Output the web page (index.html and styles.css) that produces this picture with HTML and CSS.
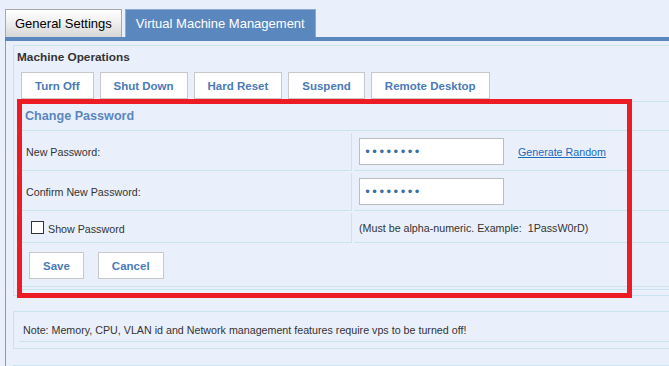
FILE: index.html
```html
<!DOCTYPE html>
<html lang="en">
  <head>
    <meta charset="UTF-8" />
    <meta name="viewport" content="width=device-width" />
    <title>Virtual Machine Management</title>
    <link rel="stylesheet" href="styles.css">
  </head>

  <body>
    <div class="tabs">
      <a class="tab" href="#">General Settings</a>
      <a class="tab active" href="#">Virtual Machine Management</a>
    </div>
    <div class="tab-bar"></div>

    <div class="panel">
      <div class="group">
        <h2>Machine Operations</h2>
        <div class="ops">
          <button type="button">Turn Off</button>
          <button type="button">Shut Down</button>
          <button type="button">Hard Reset</button>
          <button type="button">Suspend</button>
          <button type="button">Remote Desktop</button>
        </div>

        <form class="section">
          <div class="title">Change Password</div>

          <label class="cell label" for="new-pw">New Password:</label>
          <div class="cell value">
            <input type="password" id="new-pw" value="abcd1234" />
            <a href="#" class="generate">Generate Random</a>
          </div>

          <label class="cell label" for="confirm-pw">Confirm New Password:</label>
          <div class="cell value">
            <input type="password" id="confirm-pw" value="abcd1234" />
          </div>

          <div class="cell label">
            <label class="show"><input type="checkbox" class="check" />Show Password</label>
          </div>
          <div class="cell value hint">(Must be alpha-numeric. Example:&nbsp; 1PassW0rD)</div>

          <div class="cell actions">
            <button type="button">Save</button>
            <button type="button">Cancel</button>
          </div>
        </form>
      </div>

      <div class="note">
        <p>Note: Memory, CPU, VLAN id and Network management features require vps to be turned off!</p>
      </div>

      <div class="group next"></div>
    </div>

    <div class="highlight"></div>
  </body>
</html>
```

FILE: styles.css
```css
body {
  margin: 0;
  background: #eaf0fb;
  font-family: "Liberation Sans", Arial, sans-serif;
  font-size: 10.7px;
  color: #333;
  overflow: hidden;
}

/* tabs */
.tabs {
  display: flex;
  gap: 3px;
  padding: 9px 0 0 5px;
  height: 28px;
}
.tab {
  display: block;
  box-sizing: border-box;
  height: 28px;
  line-height: 27px;
  padding: 0 9px;
  font-size: 13px;
  color: #000;
  text-decoration: none;
  border: 1px solid #a8a8a8;
  border-bottom: none;
  background: linear-gradient(#ffffff, #f2f2f2 40%, #d6d6d6);
}
.tab.active {
  padding: 0 10px;
  color: #fff;
  background: #5b87bf;
  border-color: #8eaad4;
}
.tab-bar {
  height: 4px;
  margin-left: 5px;
  background: #5b87bf;
}

/* panel */
.panel {
  margin-left: 5px;
  border-left: 1px solid #7d9dd0;
  padding: 4px 0 0 7px;
}
.group {
  border: 1px solid #c9e3ef;
  border-right: none;
  padding-bottom: 5px;
}
.group.next {
  margin-top: 16px;
  height: 20px;
}
h2 {
  margin: 0;
  padding: 3px 0 0 3px;
  font-size: 11.8px;
  line-height: 16px;
  color: #333;
}

button {
  height: 27px;
  padding: 0 13px;
  font-family: inherit;
  font-size: 11.5px;
  font-weight: bold;
  color: #4a7ab9;
  background: #fff;
  border: 1px solid #c8c8c8;
  cursor: pointer;
}
.ops {
  display: flex;
  gap: 6px;
  margin-top: 7px;
  padding-left: 7px;
}

/* change password */
.section {
  display: grid;
  grid-template-columns: 333px 1fr;
  grid-template-rows: 29px 38px 38px 30px 42px;
  gap: 2px;
  margin: 2px 0 0 5px;
  padding-bottom: 2px;
  border-top: 1px solid #c9e3ef;
  border-bottom: 1px solid #c9e3ef;
}
.title,
.cell {
  display: flex;
  align-items: center;
  box-sizing: border-box;
  border-bottom: 1px solid #c9e3ef;
}
.title {
  grid-column: 1 / -1;
  padding-left: 6px;
  font-size: 12.6px;
  font-weight: bold;
  color: #5a86c0;
}
.label {
  padding-left: 7px;
  border-right: 1px solid #c9e3ef;
}
.value {
  padding-left: 5px;
}
.value input {
  box-sizing: border-box;
  width: 145px;
  height: 27px;
  padding: 0 4px;
  font-family: "DejaVu Sans", sans-serif;
  font-size: 12px;
  color: #3b6da8;
  background: #fff;
  border: 1px solid #bdbdbd;
}
.generate {
  margin-left: 14px;
  color: #1a6ac0;
}
.show {
  display: flex;
  align-items: center;
  padding-top: 3px;
}
.check {
  appearance: none;
  box-sizing: border-box;
  width: 13px;
  height: 13px;
  margin: -3px 4px 0 5px;
  background: #fff;
  border: 1px solid #333;
}
.actions {
  grid-column: 1 / -1;
  gap: 14px;
  padding-left: 10px;
}

/* note */
.note {
  margin-top: 15px;
  border: 1px solid #c9e3ef;
  border-right: none;
  padding: 0 0 6px 5px;
}
.note p {
  margin: 0;
  padding: 10px 0 3px 4px;
  line-height: 16px;
  border-bottom: 1px solid #c9e3ef;
}

/* annotation frame drawn over the password section */
.highlight {
  position: absolute;
  left: 17px;
  top: 99px;
  width: 615px;
  height: 199px;
  box-sizing: border-box;
  border: 5px solid #ed1c24;
}
```
